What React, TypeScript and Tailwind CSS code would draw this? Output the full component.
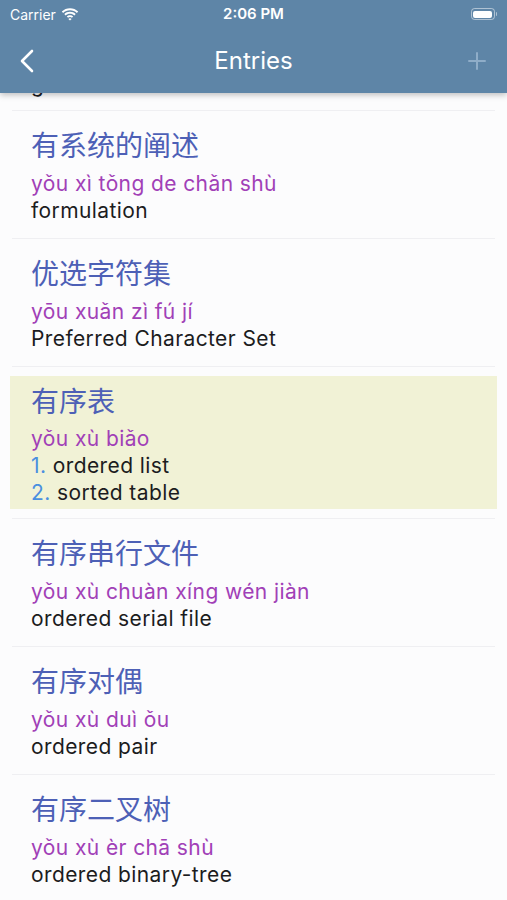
import React from 'react';

interface Entry {
  hanzi: string;
  pinyin: string;
  defs: string[];
  selected?: boolean;
}

const entries: Entry[] = [
  { hanzi: '有系统的阐述', pinyin: 'yǒu xì tǒng de chǎn shù', defs: ['formulation'] },
  { hanzi: '优选字符集', pinyin: 'yōu xuǎn zì fú jí', defs: ['Preferred Character Set'] },
  { hanzi: '有序表', pinyin: 'yǒu xù biǎo', defs: ['ordered list', 'sorted table'], selected: true },
  { hanzi: '有序串行文件', pinyin: 'yǒu xù chuàn xíng wén jiàn', defs: ['ordered serial file'] },
  { hanzi: '有序对偶', pinyin: 'yǒu xù duì ǒu', defs: ['ordered pair'] },
  { hanzi: '有序二叉树', pinyin: 'yǒu xù èr chā shù', defs: ['ordered binary-tree'] },
];

const latin = "font-['Inter','Noto_Sans',sans-serif] text-[21px] leading-[27px] tracking-[0.4px]";

function Divider() {
  return <div className="mx-3 h-px bg-[#efeff2]" />;
}

function EntryBody({ entry }: { entry: Entry }) {
  return (
    <>
      <div className="h-[34px] text-[28px] leading-[34px] text-[#4d60b6] font-['Noto_Sans_CJK_SC',sans-serif]">
        {entry.hanzi}
      </div>
      <div className={`${entry.selected ? 'mt-2' : 'mt-[9px]'} text-[#a140b7] ${latin}`}>
        {entry.pinyin}
      </div>
      {entry.defs.length === 1 ? (
        <div className={`text-[#1c1c1e] ${latin}`}>{entry.defs[0]}</div>
      ) : (
        entry.defs.map((d, i) => (
          <div key={d} className={`text-[#1c1c1e] ${latin}`}>
            <span className="text-[#4a8fe0]">{i + 1}.</span> {d}
          </div>
        ))
      )}
    </>
  );
}

function Row({ entry }: { entry: Entry }) {
  if (entry.selected) {
    return (
      <div className="py-[9px]">
        <div className="mx-[10px] bg-[#f1f2d6] pl-[21px] pt-[7px] pb-[3px]">
          <EntryBody entry={entry} />
        </div>
      </div>
    );
  }
  return (
    <div className="pl-[31px] pt-[16px] pb-[14px]">
      <EntryBody entry={entry} />
    </div>
  );
}

function Wifi() {
  return (
    <svg width="18" height="13" viewBox="0 0 18 13" fill="white">
      <path d="M9 2.2c2.7 0 5.1 1 6.9 2.7l1.3-1.4C15 1.4 12.1.2 9 .2S3 1.4.8 3.5l1.3 1.4C3.9 3.2 6.3 2.2 9 2.2z" />
      <path d="M9 5.7c1.7 0 3.2.6 4.4 1.7l1.3-1.4C13.2 4.6 11.2 3.8 9 3.8S4.8 4.6 3.3 6l1.3 1.4C5.8 6.3 7.3 5.7 9 5.7z" />
      <path d="M9 9.1c.8 0 1.4.3 1.9.7L12.2 8.4C11.4 7.7 10.3 7.2 9 7.2s-2.4.5-3.2 1.2l1.3 1.4c.5-.4 1.1-.7 1.9-.7z" />
      <path d="M9 12.6l1.6-1.7c-.4-.4-1-.6-1.6-.6s-1.2.2-1.6.6z" />
    </svg>
  );
}

function Battery() {
  return (
    <div className="flex items-center">
      <div className="w-[24px] h-[12px] rounded-[3.5px] border border-white/50 p-[1.5px]">
        <div className="w-full h-full rounded-[2px] bg-white" />
      </div>
      <div className="w-[1.5px] h-[4px] rounded-r bg-white/50 ml-[1px]" />
    </div>
  );
}

export default function App() {
  return (
    <div className="w-[507px] h-[900px] overflow-hidden bg-[#fcfcfd] relative">
      {/* Header */}
      <div className="absolute inset-x-0 top-0 z-10 h-[93px] bg-[#5e85a7] shadow-[0_2px_6px_rgba(0,0,0,0.25)]">
        <div className="h-[28px] relative flex items-center px-[10px] text-white font-['Inter',sans-serif]">
          <div className="flex items-center gap-[5px] text-[14px]">
            <span>Carrier</span>
            <Wifi />
          </div>
          <div className="absolute left-0 right-0 text-center text-[15px] font-semibold">2:06 PM</div>
          <div className="ml-auto">
            <Battery />
          </div>
        </div>
        <div className="h-[65px] relative flex items-center px-[20px]">
          <svg width="14" height="24" viewBox="0 0 14 24" fill="none" stroke="white" strokeWidth="2.6" strokeLinecap="round" strokeLinejoin="round">
            <path d="M12 2 2 12l10 10" />
          </svg>
          <div className="absolute inset-x-0 text-center text-[24px] text-white font-['Inter',sans-serif]">
            Entries
          </div>
          <svg className="ml-auto mr-[1px]" width="18" height="18" viewBox="0 0 18 18" stroke="#8fadc8" strokeWidth="2" strokeLinecap="round">
            <path d="M9 1v16M1 9h16" />
          </svg>
        </div>
      </div>

      {/* List */}
      <div className="pt-[93px]">
        <div className="h-[17px] overflow-hidden pl-[31px]">
          <div className={`-mt-[22px] text-[#1c1c1e] ${latin}`}>g</div>
        </div>
        {entries.map((e) => (
          <div key={e.hanzi}>
            <Divider />
            <Row entry={e} />
          </div>
        ))}
        <Divider />
      </div>
    </div>
  );
}
